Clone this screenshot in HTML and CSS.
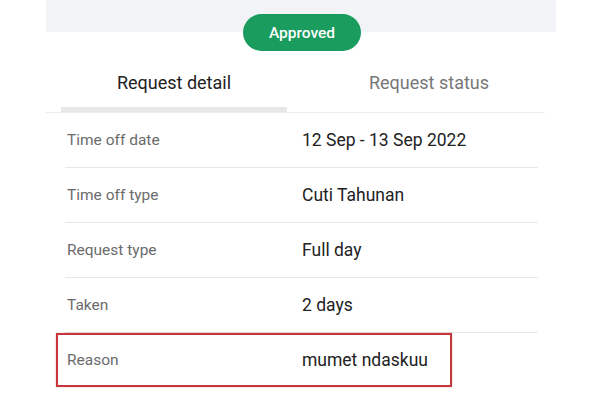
FILE: index.html
```
<!DOCTYPE html>
<html>
<head>
<meta charset="utf-8">
<link rel="stylesheet" href="styles.css">
</head>
<body>
<div class="sheet">
  <div class="band"></div>
  <div class="status-wrap"><span class="pill">Approved</span></div>
  <div class="tabs">
    <div class="tab active">Request detail</div>
    <div class="tab">Request status</div>
  </div>
  <div class="tab-line"></div>
  <div class="rows">
    <div class="row"><span class="label">Time off date</span><span class="value">12 Sep - 13 Sep 2022</span></div>
    <div class="row"><span class="label">Time off type</span><span class="value">Cuti Tahunan</span></div>
    <div class="row"><span class="label">Request type</span><span class="value">Full day</span></div>
    <div class="row"><span class="label">Taken</span><span class="value">2 days</span></div>
    <div class="row last"><span class="label">Reason</span><span class="value">mumet ndaskuu</span><span class="highlight"></span></div>
  </div>
</div>
</body>
</html>
```
FILE: styles.css
```
html, body {
  margin: 0;
  padding: 0;
  background: #ffffff;
}
body {
  font-family: Roboto, "Liberation Sans", sans-serif;
  width: 600px;
  height: 400px;
  overflow: hidden;
}
.sheet {
  margin-left: 46px;
  width: 510px;
}
.band {
  height: 32px;
  background: #f2f3f7;
}
.status-wrap {
  display: flex;
  justify-content: center;
  margin-top: -18px;
  padding-left: 2px;
}
.pill {
  width: 118px;
  height: 37px;
  border-radius: 19px;
  background: #199c5e;
  color: #ffffff;
  font-size: 15.5px;
  font-weight: 500;
  display: flex;
  align-items: center;
  justify-content: center;
}
.tabs {
  display: grid;
  grid-template-columns: 226px 260px;
  margin-top: 8px;
  padding-left: 15px;
}
.tab {
  height: 48px;
  line-height: 48px;
  font-size: 18px;
  color: #777777;
  text-align: center;
  border-bottom: 5px solid transparent;
}
.tab + .tab {
  padding-left: 24px;
}
.tab.active {
  color: #222222;
  border-bottom-color: #e7e7e7;
}
.tab-line {
  height: 1px;
  width: 499px;
  background: #ededed;
}
.rows {
  margin-left: 19px;
  width: 473px;
}
.row {
  position: relative;
  height: 54px;
  display: grid;
  grid-template-columns: 235px 1fr;
  align-items: center;
  padding-left: 2px;
  border-bottom: 1px solid #e8e8e8;
}
.row.last {
  border-bottom: none;
}
.label {
  font-size: 15.5px;
  color: #6b6b6b;
}
.value {
  font-size: 17.5px;
  color: #222222;
}
.highlight {
  position: absolute;
  left: -9px;
  top: 0;
  width: 392px;
  height: 50px;
  border: 2px solid #c4383c;
  box-shadow: 0 0 2px rgba(196, 56, 60, 0.35);
}
```
